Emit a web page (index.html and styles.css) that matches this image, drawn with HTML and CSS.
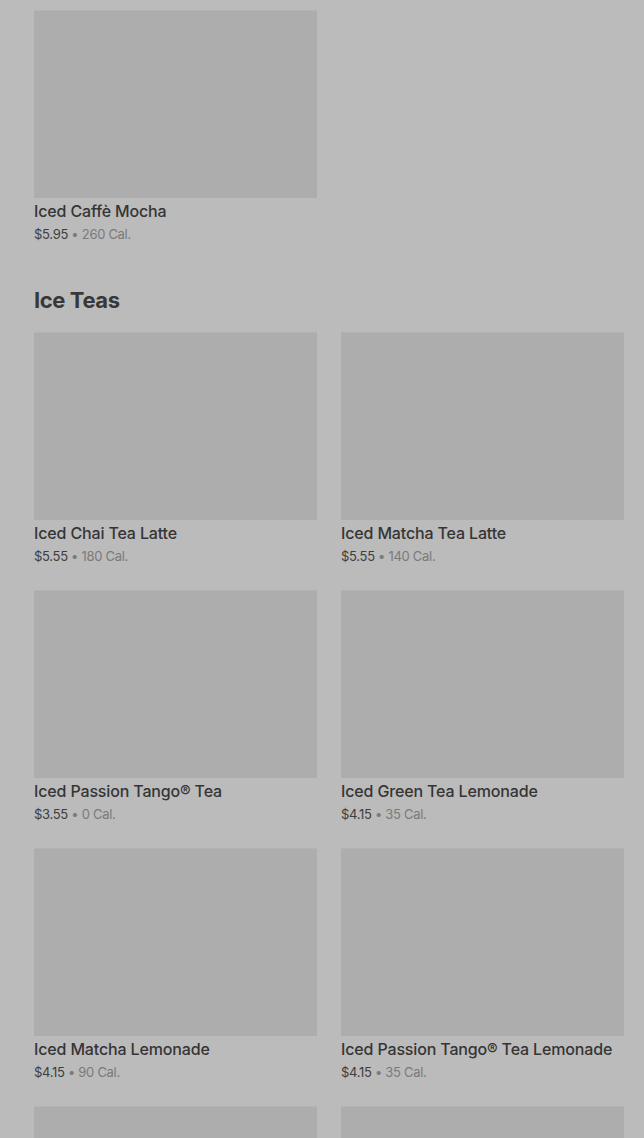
FILE: index.html
```html
<!DOCTYPE html>
<html>
<head>
<meta charset="utf-8">
<link rel="stylesheet" href="styles.css">
</head>
<body>
<main class="menu">
  <section class="section first">
    <div class="grid">
      <div class="card">
        <div class="thumb"></div>
        <div class="name">Iced Caffè Mocha</div>
        <div class="meta"><span class="price">$5.95</span> • <span>260 Cal.</span></div>
      </div>
    </div>
  </section>
  <section class="section">
    <h2 class="heading">Ice Teas</h2>
    <div class="grid">
      <div class="card">
        <div class="thumb"></div>
        <div class="name">Iced Chai Tea Latte</div>
        <div class="meta"><span class="price">$5.55</span> • <span>180 Cal.</span></div>
      </div>
      <div class="card">
        <div class="thumb"></div>
        <div class="name">Iced Matcha Tea Latte</div>
        <div class="meta"><span class="price">$5.55</span> • <span>140 Cal.</span></div>
      </div>
      <div class="card">
        <div class="thumb"></div>
        <div class="name">Iced Passion Tango® Tea</div>
        <div class="meta"><span class="price">$3.55</span> • <span>0 Cal.</span></div>
      </div>
      <div class="card">
        <div class="thumb"></div>
        <div class="name">Iced Green Tea Lemonade</div>
        <div class="meta"><span class="price">$4.15</span> • <span>35 Cal.</span></div>
      </div>
      <div class="card">
        <div class="thumb"></div>
        <div class="name">Iced Matcha Lemonade</div>
        <div class="meta"><span class="price">$4.15</span> • <span>90 Cal.</span></div>
      </div>
      <div class="card">
        <div class="thumb"></div>
        <div class="name">Iced Passion Tango® Tea Lemonade</div>
        <div class="meta"><span class="price">$4.15</span> • <span>35 Cal.</span></div>
      </div>
      <div class="card">
        <div class="thumb"></div>
      </div>
      <div class="card">
        <div class="thumb"></div>
      </div>
    </div>
  </section>
</main>
</body>
</html>
```
FILE: styles.css
```css
html, body {
  margin: 0;
  padding: 0;
  background: #bbbbbb;
  overflow: hidden;
  height: 1138px;
}
body {
  font-family: Inter, Roboto, "Liberation Sans", sans-serif;
  color: #363636;
}
.menu {
  padding: 10px 20px 0 34px;
}
.section.first {
  margin-bottom: 43px;
}
.heading {
  margin: 0 0 18px 0;
  font-size: 22px;
  line-height: 28px;
  font-weight: 700;
  color: #383838;
  letter-spacing: -0.4px;
}
.grid {
  display: grid;
  grid-template-columns: 283px 283px;
  column-gap: 24px;
  row-gap: 25px;
}
.thumb {
  height: 188px;
  background: #adadad;
  border-top: 1px solid #b3b3b3;
  box-sizing: border-box;
}
.name {
  margin-top: 3px;
  font-size: 16px;
  line-height: 20px;
  font-weight: 500;
  color: #353535;
  letter-spacing: -0.15px;
}
.meta {
  margin-top: 4px;
  font-size: 13px;
  line-height: 18px;
  color: #7a7a7a;
  letter-spacing: -0.3px;
}
.price {
  color: #3e3e3e;
}
```
